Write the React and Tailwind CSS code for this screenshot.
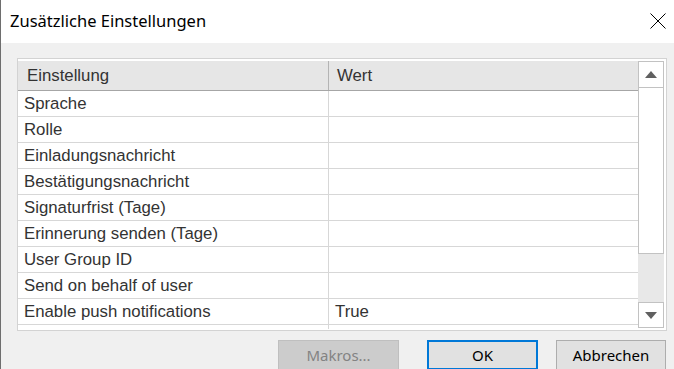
const rows = [
  ["Sprache", ""],
  ["Rolle", ""],
  ["Einladungsnachricht", ""],
  ["Bestätigungsnachricht", ""],
  ["Signaturfrist (Tage)", ""],
  ["Erinnerung senden (Tage)", ""],
  ["User Group ID", ""],
  ["Send on behalf of user", ""],
  ["Enable push notifications", "True"],
];

function Arrow({ up }) {
  return (
    <svg width="12" height="7" viewBox="0 0 12 7">
      {up ? (
        <polygon points="0,7 12,7 6,0" fill="#606060" />
      ) : (
        <polygon points="0,0 12,0 6,7" fill="#606060" />
      )}
    </svg>
  );
}

export default function App() {
  return (
    <div className="w-[674px] h-[369px] bg-[#f0f0f0] border-l border-[#6e6e6e] overflow-hidden flex flex-col font-['Noto_Sans',sans-serif]">
      {/* title bar */}
      <div className="h-[43px] shrink-0 bg-white flex items-center justify-between pl-[9px] pr-[8px]">
        <span className="text-[16.5px] text-[#000] leading-none pb-[1px]">Zusätzliche Einstellungen</span>
        <svg width="16" height="16" viewBox="0 0 16 16" className="mb-[2px]">
          <path d="M0.5 0.5 L15.5 15.5 M15.5 0.5 L0.5 15.5" stroke="#000" strokeWidth="1" />
        </svg>
      </div>

      {/* table */}
      <div className="mt-[15px] ml-[16px] w-[650px] h-[273px] shrink-0 border border-[#d3d3d3] bg-white py-px pr-[2px] flex font-['Liberation_Sans',Arial,sans-serif] text-[16.8px] text-[#333]">
        <div className="w-[620px] flex flex-col overflow-hidden">
          <div className="h-[30px] shrink-0 flex bg-[#e6e6e6] border-b border-[#a6a6a6] mt-px">
            <div className="w-[311px] border-r border-[#b4b4b4] pl-[9px] flex items-center">Einstellung</div>
            <div className="flex-1 pl-[8px] flex items-center">Wert</div>
          </div>
          {rows.map(([k, v]) => (
            <div key={k} className="h-[26px] shrink-0 flex border-b border-[#d7d7d7]">
              <div className="w-[311px] border-r border-[#d7d7d7] pl-[6px] flex items-center">{k}</div>
              <div className="flex-1 pl-[6px] flex items-center">{v}</div>
            </div>
          ))}
          <div className="flex-1 flex">
            <div className="w-[311px] border-r border-[#d7d7d7]" />
          </div>
        </div>

        {/* scrollbar */}
        <div className="w-[26px] flex flex-col mt-px">
          <div className="h-[27px] border border-[#c2c2c2] bg-white flex items-center justify-center">
            <Arrow up />
          </div>
          <div className="h-[166px] border-x border-b border-[#c2c2c2] bg-white" />
          <div className="flex-1 bg-[#e8e8e8]" />
          <div className="h-[26px] border border-[#c2c2c2] bg-white flex items-center justify-center">
            <Arrow />
          </div>
          <div className="h-[1px]" />
        </div>
      </div>

      {/* buttons */}
      <div className="mt-[9px] flex text-[15px]">
        <div className="ml-[277px] w-[121px] h-[30px] bg-[#cccccc] border border-[#bfbfbf] text-[#838383] flex items-center justify-center">
          Makros...
        </div>
        <div className="ml-[28px] w-[111px] h-[30px] bg-[#e1e1e1] border-2 border-[#0078d7] text-black flex items-center justify-center">
          OK
        </div>
        <div className="ml-[18px] w-[110px] h-[30px] bg-[#e1e1e1] border border-[#adadad] text-black flex items-center justify-center">
          Abbrechen
        </div>
      </div>
    </div>
  );
}
